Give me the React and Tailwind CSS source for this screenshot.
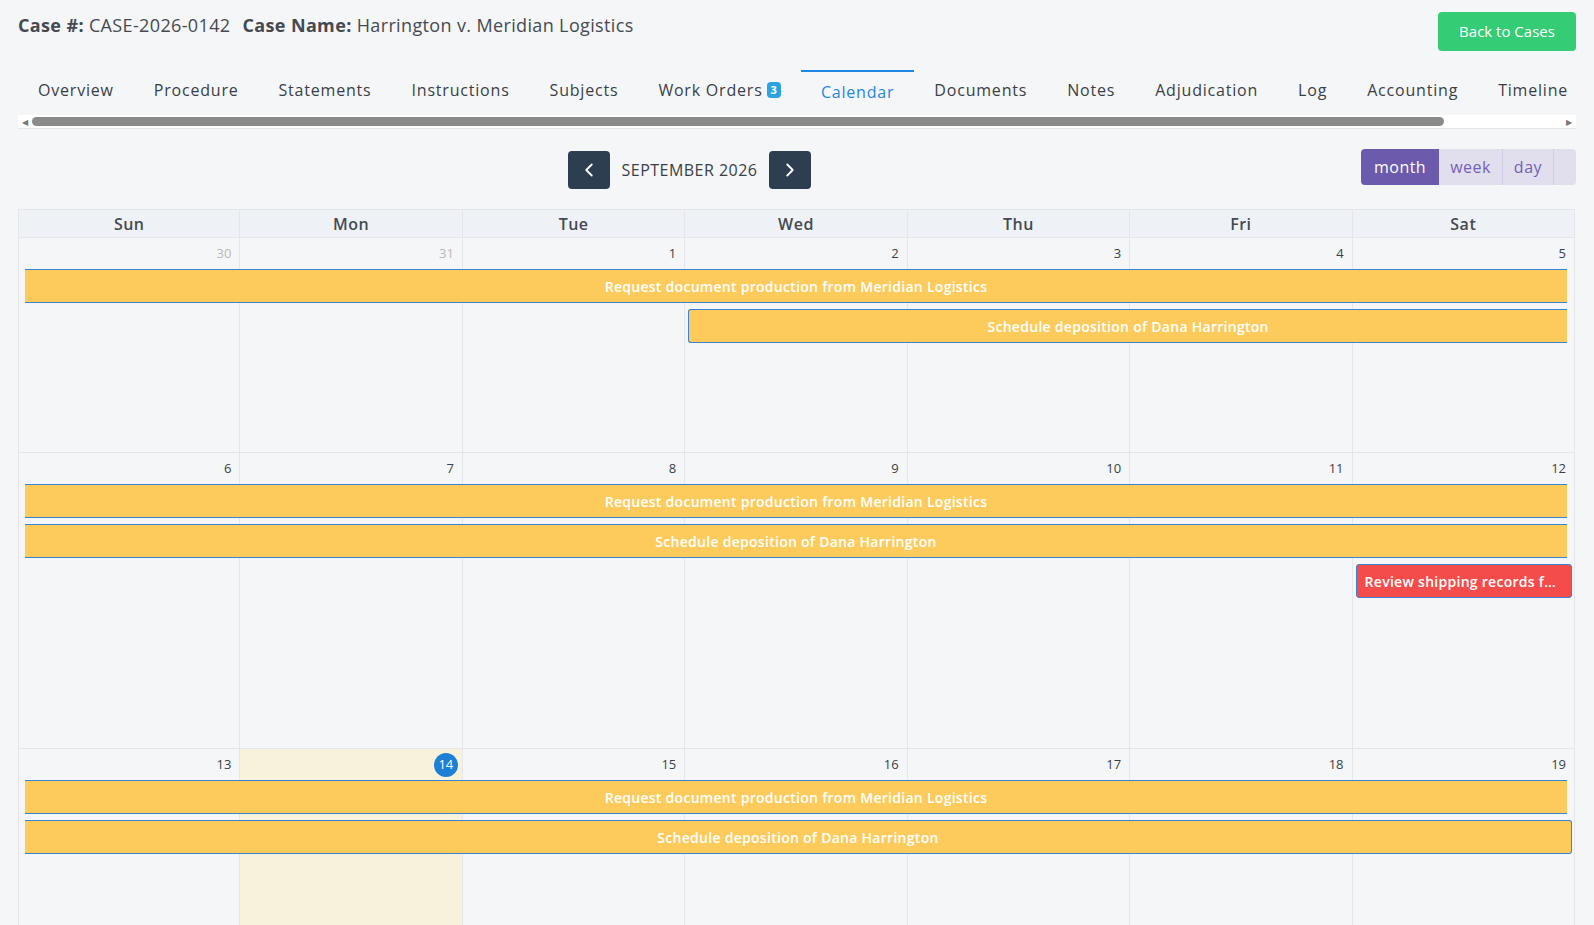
import { ChevronLeft, ChevronRight } from 'lucide-react';

const tabs = ['Overview', 'Procedure', 'Statements', 'Instructions', 'Subjects', 'Work Orders', 'Calendar', 'Documents', 'Notes', 'Adjudication', 'Log', 'Accounting', 'Timeline'];
const days = ['Sun', 'Mon', 'Tue', 'Wed', 'Thu', 'Fri', 'Sat'];
const COL = 1557 / 7;

const weeks = [
  {
    dates: [30, 31, 1, 2, 3, 4, 5],
    muted: [0, 1],
    height: 215,
    events: [
      { title: 'Request document production from Meridian Logistics', start: 0, end: 7, top: 31, open: true },
      { title: 'Schedule deposition of Dana Harrington', start: 3, end: 7, top: 71, open: true },
    ],
  },
  {
    dates: [6, 7, 8, 9, 10, 11, 12],
    muted: [],
    height: 296,
    events: [
      { title: 'Request document production from Meridian Logistics', start: 0, end: 7, top: 31, open: true },
      { title: 'Schedule deposition of Dana Harrington', start: 0, end: 7, top: 71, open: true },
      { title: 'Review shipping records for Meridian Logistics', start: 6, end: 7, top: 111, red: true },
    ],
  },
  {
    dates: [13, 14, 15, 16, 17, 18, 19],
    muted: [],
    today: 1,
    height: 200,
    events: [
      { title: 'Request document production from Meridian Logistics', start: 0, end: 7, top: 31, open: true },
      { title: 'Schedule deposition of Dana Harrington', start: 0, end: 7, top: 71 },
    ],
  },
];

function Week({ week }) {
  return (
    <div className="relative border-b border-[#e4e6ea]" style={{ height: week.height }}>
      <div className="grid grid-cols-7 h-full">
        {week.dates.map((d, i) => (
          <div key={i} className={`border-r border-[#e4e6ea] first:border-l ${week.today === i ? 'bg-[#f7f2db]' : ''}`}>
            <div className="flex justify-end pr-2 pt-1.5 h-7">
              {week.today === i ? (
                <span className="w-6 h-6 rounded-full bg-[#1e7fd6] text-white text-[13px] flex items-center justify-center -mt-0.5 -mr-1">{d}</span>
              ) : (
                <span className={`text-[13px] ${week.muted.includes(i) ? 'text-[#b5b8bd]' : 'text-[#3a3f47]'}`}>{d}</span>
              )}
            </div>
          </div>
        ))}
      </div>
      {week.events.map((e, k) => {
        const left = e.start * COL + (e.start === 0 ? 7 : 3);
        const right = e.red ? 3 : e.open ? 8 : 3;
        return (
          <div
            key={k}
            className={`absolute h-[34px] flex items-center text-white font-semibold text-[14px] tracking-[0.02em] border border-[#3b82d6] whitespace-nowrap overflow-hidden ${e.red ? 'bg-[#f44c4a] rounded-[3px] px-2' : 'bg-[#fccb5c] justify-center'} ${e.open ? 'border-r-0' : 'rounded-r-[3px]'} ${e.start === 0 ? 'border-l-0' : 'rounded-l-[3px]'}`}
            style={{ left, right, top: e.top }}
          >
            <span className={e.red ? 'truncate' : ''}>{e.title}</span>
          </div>
        );
      })}
    </div>
  );
}

export default function App() {
  return (
    <div className="w-[1594px] h-[925px] overflow-hidden bg-[#f5f6f8] text-[#3a3f47]" style={{ fontFamily: '"Open Sans", sans-serif' }}>
      <div className="px-[18px]">
        <div className="flex justify-between pt-3">
          <div className="text-[18px] text-[#454a52] tracking-[0.02em]">
            <span className="font-bold">Case #:</span> CASE-2026-0142
            <span className="font-bold ml-3">Case Name:</span> Harrington v. Meridian Logistics
          </div>
          <button className="w-[138px] h-[39px] rounded bg-[#34cc74] text-white text-[15px]">Back to Cases</button>
        </div>

        <div className="mt-[19px] flex whitespace-nowrap overflow-hidden h-[38px]">
          {tabs.map((t) => (
            <div
              key={t}
              className={`px-5 flex items-center text-[16px] tracking-[0.05em] border-t-2 ${t === 'Calendar' ? 'border-[#1e88e5] text-[#1e88e5] pt-1' : 'border-transparent text-[#3a3f47]'}`}
            >
              {t}
              {t === 'Work Orders' && (
                <span className="ml-1 bg-[#2aa3e0] text-white text-[11px] font-bold rounded-sm px-1 leading-4 tracking-normal">3</span>
              )}
            </div>
          ))}
        </div>
        <div className="h-[14px] mt-[7px] bg-white flex items-center border-b border-[#e4e6ea]">
          <span className="text-[#777] text-[8px] px-1">◀</span>
          <div className="h-[9px] bg-[#8b8b8b] rounded-full w-[1412px]"></div>
          <div className="flex-1"></div>
          <span className="text-[#777] text-[8px] px-1">▶</span>
        </div>

        <div className="relative h-[80px] flex items-center justify-center">
          <div className="flex items-center gap-3 -ml-[215px] mt-0.5">
            <button className="w-[42px] h-[38px] rounded bg-[#2c3e50] text-white flex items-center justify-center"><ChevronLeft size={22} /></button>
            <span className="text-[16px] text-[#3a3f47] tracking-[0.03em]">SEPTEMBER 2026</span>
            <button className="w-[42px] h-[38px] rounded bg-[#2c3e50] text-white flex items-center justify-center"><ChevronRight size={22} /></button>
          </div>
          <div className="absolute right-0 top-[20px] flex h-[36px] rounded overflow-hidden text-[16px] tracking-[0.03em]">
            <div className="bg-[#6c5aac] text-white px-[13px] flex items-center">month</div>
            <div className="bg-[#e1dfee] text-[#7461b3] px-[11px] flex items-center border-r border-[#cfcce3]">week</div>
            <div className="bg-[#e1dfee] text-[#7461b3] px-[11px] flex items-center border-r border-[#cfcce3]">day</div>
            <div className="bg-[#e1dfee] w-[22px]"></div>
          </div>
        </div>

        <div className="w-[1557px]">
          <div className="grid grid-cols-7 h-[29px] bg-[#eef2f6] border-t border-b border-[#e4e6ea]">
            {days.map((d) => (
              <div key={d} className="border-r border-[#e4e6ea] first:border-l flex items-center justify-center text-[16px] font-semibold text-[#454a52] tracking-[0.03em]">{d}</div>
            ))}
          </div>
          {weeks.map((w, i) => <Week key={i} week={w} />)}
        </div>
      </div>
    </div>
  );
}
